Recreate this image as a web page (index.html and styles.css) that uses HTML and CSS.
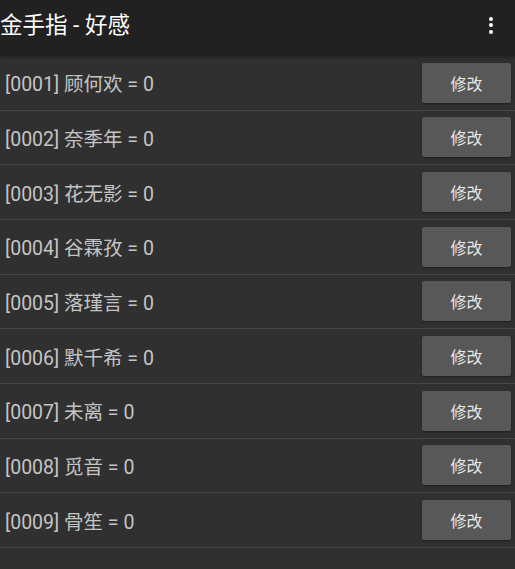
FILE: index.html
```html
<!DOCTYPE html>
<html lang="zh">
<head>
<meta charset="utf-8">
<link rel="stylesheet" href="styles.css">
</head>
<body>
<div class="app">
  <header class="toolbar">
    <h1 class="title">金手指 - 好感</h1>
    <div class="menu" aria-label="更多">
      <span class="dot"></span><span class="dot"></span><span class="dot"></span>
    </div>
  </header>
  <ul class="list">
    <li class="row"><span class="label">[0001] 顾何欢 = 0</span><button class="btn">修改</button></li>
    <li class="row"><span class="label">[0002] 奈季年 = 0</span><button class="btn">修改</button></li>
    <li class="row"><span class="label">[0003] 花无影 = 0</span><button class="btn">修改</button></li>
    <li class="row"><span class="label">[0004] 谷霖孜 = 0</span><button class="btn">修改</button></li>
    <li class="row"><span class="label">[0005] 落瑾言 = 0</span><button class="btn">修改</button></li>
    <li class="row"><span class="label">[0006] 默千希 = 0</span><button class="btn">修改</button></li>
    <li class="row"><span class="label">[0007] 未离 = 0</span><button class="btn">修改</button></li>
    <li class="row"><span class="label">[0008] 觅音 = 0</span><button class="btn">修改</button></li>
    <li class="row"><span class="label">[0009] 骨笙 = 0</span><button class="btn">修改</button></li>
  </ul>
</div>
</body>
</html>
```
FILE: styles.css
```css
html, body {
  margin: 0;
  padding: 0;
  background: #303030;
  font-family: Roboto, "Noto Sans CJK SC", sans-serif;
}
.app {
  width: 515px;
  height: 569px;
  overflow: hidden;
  background: #303030;
}
.toolbar {
  height: 56px;
  background: #212121;
  display: flex;
  align-items: center;
  justify-content: space-between;
  box-shadow: 0 2px 3px rgba(0,0,0,0.25);
  position: relative;
  z-index: 1;
}
.title {
  margin: 0;
  padding-left: 0;
  font-size: 22.5px;
  font-weight: 400;
  color: #ffffff;
  line-height: 1;
  margin-top: -6px;
}
.menu {
  width: 24px;
  display: flex;
  flex-direction: column;
  align-items: center;
  gap: 2.5px;
  margin-right: 12px;
  margin-top: -6px;
}
.dot {
  width: 4px;
  height: 4px;
  border-radius: 50%;
  background: #ffffff;
}
.list {
  list-style: none;
  margin: 0;
  padding: 0;
}
.row {
  box-sizing: border-box;
  height: 54.67px;
  border-bottom: 1px solid #474747;
  display: flex;
  align-items: center;
  justify-content: space-between;
  padding-left: 5px;
  padding-right: 4px;
}
.label {
  font-size: 19.5px;
  color: #c4c4c4;
  margin-top: 0;
}
.btn {
  width: 89px;
  height: 40px;
  border: none;
  border-radius: 2px;
  background: #585858;
  color: #e6e6e6;
  font-family: Roboto, "Noto Sans CJK SC", sans-serif;
  font-size: 16px;
  box-shadow: 0 1px 2px rgba(0,0,0,0.35);
  padding: 0;
}
```
